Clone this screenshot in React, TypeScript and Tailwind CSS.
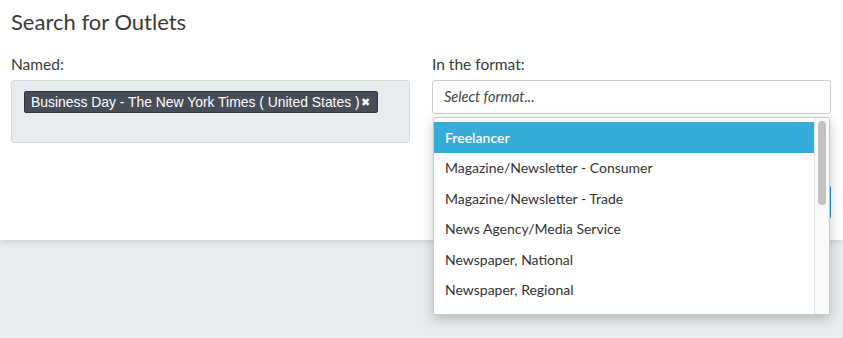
import React from 'react';

const formats = [
  'Freelancer',
  'Magazine/Newsletter - Consumer',
  'Magazine/Newsletter - Trade',
  'News Agency/Media Service',
  'Newspaper, National',
  'Newspaper, Regional',
  'Online',
];

export default function App() {
  return (
    <div className="min-h-[338px] bg-[#e9ecef] font-['Lato','Noto_Sans',sans-serif] text-[#333]">
      {/* White search panel */}
      <div className="h-[240px] bg-white pl-[11px] pr-[11px] pt-[8px] shadow-[0_2px_6px_rgba(0,0,0,0.12)]">
        <h1 className="text-[22px] leading-[28px] text-[#3a3a3a]">Search for Outlets</h1>

        <div className="mt-[18px] grid grid-cols-[399px_399px] gap-x-[22px]">
          {/* Named */}
          <div>
            <div className="text-[15.5px] leading-[20px] text-[#3a3a3a]">Named:</div>
            <div className="mt-[6px] h-[63px] rounded-[3px] border border-[#d3d7dc] bg-[#e9ecef] px-[12px] pt-[8px]">
              <span className="inline-flex h-[22px] items-center gap-[1px] rounded-[2px] border border-[#2f3540] bg-[#464c58] pl-[6px] pr-[7px] font-['Liberation_Sans',Arial,sans-serif] text-[13.9px] text-white">
                Business Day - The New York Times ( United States )
                <span className="text-[11px] leading-none">✖</span>
              </span>
            </div>
          </div>

          {/* In the format */}
          <div className="relative">
            <div className="text-[15.5px] leading-[20px] text-[#3a3a3a]">In the format:</div>
            <div className="mt-[6px] flex h-[34px] items-center rounded-[3px] border border-[#ccc] bg-white px-[11px] text-[14.5px] italic text-[#444]">
              Select format...
            </div>

            <div className="absolute left-[1px] top-[63px] z-10 flex h-[198px] w-[397px] overflow-hidden rounded-[2px] border border-[#c8c8c8] bg-white shadow-[0_4px_12px_rgba(0,0,0,0.22)]">
              <ul className="flex-1 pt-[4px]">
                {formats.map((f, i) => (
                  <li
                    key={f}
                    className={`flex h-[30.5px] items-center px-[11px] text-[14px] ${
                      i === 0 ? 'bg-[#36acdb] font-semibold text-white' : 'text-[#333]'
                    }`}
                  >
                    {f}
                  </li>
                ))}
              </ul>
              <div className="w-[15px] border-l border-[#e3e3e3] bg-[#fafafa] px-[3px] pt-[3px]">
                <div className="h-[84px] rounded-full bg-[#c1c1c1]" />
              </div>
            </div>

            <div className="mt-[71px] flex justify-end">
              <button className="h-[34px] w-[110px] rounded-[3px] bg-[#1a8fcc] text-[14px] text-white">
                Search
              </button>
            </div>
          </div>
        </div>
      </div>
    </div>
  );
}
